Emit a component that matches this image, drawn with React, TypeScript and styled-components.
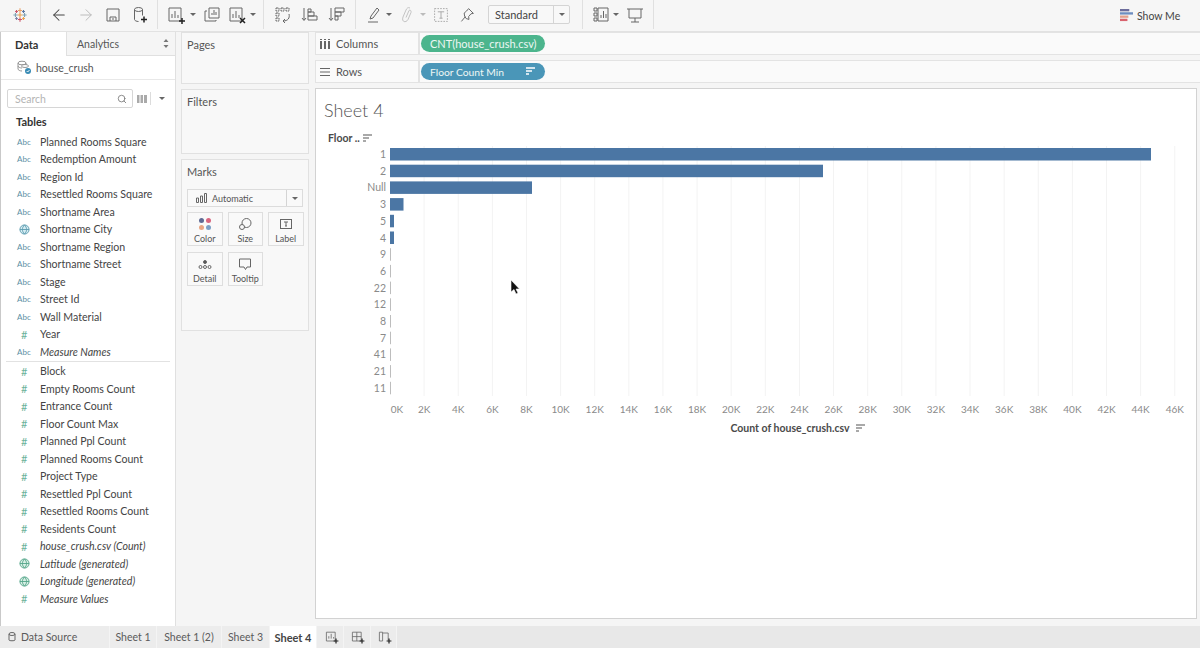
import React from 'react'
import styled, { createGlobalStyle } from 'styled-components'
import { ArrowLeft, ArrowRight, Search } from 'lucide-react'

const GlobalStyle = createGlobalStyle`
    html, body { margin: 0; padding: 0; background: #f5f5f5; }
    body { font-family: "Lato", "Liberation Sans", sans-serif; color: #4a4a4a; overflow: hidden; }
`;

const Page = styled.div`
    width: 1200px;
    height: 648px;
    display: flex;
    flex-direction: column;
    overflow: hidden;
    position: relative;
`;

const Toolbar = styled.div`
    height: 32px;
    flex: none;
    display: flex;
    align-items: stretch;
    box-sizing: border-box;
    border-bottom: 1px solid #e2e2e2;
    background: #f6f6f6;
`;

const ToolGroup = styled.div<{ $w: number; $start?: number }>`
    width: ${p => p.$w}px;
    flex: none;
    box-sizing: border-box;
    display: flex;
    align-items: center;
    justify-content: ${p => p.$start ? 'flex-start' : 'center'};
    padding-left: ${p => p.$start || 0}px;
    border-right: 1px solid #e0e0e0;
    height: 29px;
`;

const ToolButton = styled.div<{ $w?: number; $ml?: number }>`
    width: ${p => p.$w || 27}px;
    height: 24px;
    flex: none;
    margin-left: ${p => p.$ml || 0}px;
    display: flex;
    align-items: center;
    justify-content: center;
    color: #666;
`;

const Caret = styled.span<{ $light?: boolean }>`
    width: 0;
    height: 0;
    flex: none;
    border-left: 3px solid transparent;
    border-right: 3px solid transparent;
    border-top: 3px solid ${p => p.$light ? '#bbb' : '#666'};
`;

const StandardSelect = styled.div`
    width: 82px;
    height: 19px;
    margin-left: 10px;
    box-sizing: border-box;
    border: 1px solid #d4d4d4;
    border-radius: 2px;
    display: flex;
    align-items: center;
    background: #f8f8f8;
    font-size: 11px;
    color: #444;
`;

const StandardText = styled.span`
    flex: 1;
    padding-left: 6px;
`;

const SelectArrow = styled.div`
    width: 15px;
    height: 100%;
    border-left: 1px solid #d4d4d4;
    display: flex;
    align-items: center;
    justify-content: center;
`;

const ShowMe = styled.div`
    margin-left: auto;
    width: 80px;
    display: flex;
    align-items: center;
    gap: 4px;
    font-size: 10.5px;
    color: #444;
`;

const Main = styled.div`
    flex: 1;
    min-height: 0;
    display: flex;
`;

const DataPane = styled.div`
    width: 176px;
    flex: none;
    box-sizing: border-box;
    background: #fff;
    border-left: 1px solid #c9c9c9;
    border-right: 1px solid #e0e0e0;
    display: flex;
    flex-direction: column;
    height: 594px;
`;

const TabRow = styled.div`
    height: 24px;
    flex: none;
    display: flex;
    font-size: 11px;
`;

const PaneTab = styled.div<{ $active?: boolean }>`
    box-sizing: border-box;
    display: flex;
    align-items: center;
    ${p => p.$active
        ? 'width: 65px; padding-left: 14px; font-weight: 700; color: #333; background: #fff;'
        : 'flex: 1; padding-left: 10px; font-size: 10.5px; background: #f5f5f5; border-left: 1px solid #e0e0e0; border-bottom: 1px solid #e0e0e0; color: #555; justify-content: space-between; padding-right: 6px;'}
`;

const SourceRow = styled.div`
    height: 24px;
    flex: none;
    box-sizing: border-box;
    display: flex;
    align-items: center;
    gap: 4px;
    padding-left: 16px;
    font-size: 10.5px;
    color: #555;
    border-bottom: 1px solid #e8e8e8;
`;

const SearchRow = styled.div`
    flex: none;
    display: flex;
    align-items: center;
    padding: 9px 0 0 6px;
    height: 19px;
`;

const SearchBox = styled.div`
    width: 126px;
    height: 19px;
    box-sizing: border-box;
    border: 1px solid #d6d6d6;
    border-radius: 2px;
    display: flex;
    align-items: center;
    justify-content: space-between;
    padding: 0 5px 0 7px;
    font-size: 10.5px;
    color: #b4b4b4;
`;

const ViewToggle = styled.div`
    display: flex;
    align-items: center;
    margin-left: 4px;
`;

const ToggleDivider = styled.span`
    width: 1px;
    height: 13px;
    margin: 0 8px 0 3px;
    background: #dcdcdc;
`;

const TablesHeading = styled.div`
    font-size: 11px;
    font-weight: 700;
    color: #333;
    padding-left: 15px;
    margin-top: 5px;
    height: 18px;
    line-height: 18px;
`;

const FieldList = styled.div`
    margin-top: 2px;
    display: flex;
    flex-direction: column;
`;

const FieldRow = styled.div`
    height: 17.5px;
    display: flex;
    align-items: center;
    font-size: 10.6px;
    color: #444;
    white-space: nowrap;
`;

const FieldIcon = styled.span<{ $kind: string }>`
    width: 39px;
    flex: none;
    box-sizing: border-box;
    padding-left: ${p => p.$kind === 'abc' ? 16 : p.$kind === 'num' ? 20 : 18}px;
    font-size: ${p => p.$kind === 'abc' ? 8 : 11}px;
    color: ${p => p.$kind === 'abc' ? '#5c8fa5' : '#6cb39b'};
    display: flex;
    align-items: center;
`;

const FieldName = styled.span<{ $italic?: boolean }>`
    font-style: ${p => p.$italic ? 'italic' : 'normal'};
`;

const FieldSeparator = styled.div`
    height: 1px;
    margin: 0.5px 5px 0.5px 5px;
    background: #e2e2e2;
`;

const CardsColumn = styled.div`
    width: 128px;
    flex: none;
    margin: 0 6px 0 5px;
    display: flex;
    flex-direction: column;
    gap: 5px;
`;

const Card = styled.div<{ $h: number }>`
    height: ${p => p.$h}px;
    box-sizing: border-box;
    border: 1px solid #e1e1e1;
    background: #f8f8f8;
    padding: 5px 5px;
    font-size: 11px;
    color: #555;
`;

const MarksType = styled.div`
    height: 18px;
    box-sizing: border-box;
    margin-top: 11px;
    border: 1px solid #dcdcdc;
    display: flex;
    align-items: center;
    font-size: 9px;
    color: #555;
    background: #f9f9f9;
    svg { margin-left: 8px; }
`;

const MarksTypeText = styled.span`
    flex: 1;
    margin-left: 4px;
`;

const MarksGrid = styled.div`
    margin-top: 5px;
    display: grid;
    grid-template-columns: 35.5px 35.5px 35.5px;
    grid-auto-rows: 34px;
    column-gap: 5px;
    row-gap: 6px;
`;

const MarkButton = styled.div`
    box-sizing: border-box;
    border: 1px solid #dedede;
    background: #f9f9f9;
    display: flex;
    flex-direction: column;
    align-items: center;
    justify-content: space-between;
    padding: 4px 0 1px;
    font-size: 9px;
    color: #555;
    svg { flex: none; }
`;

const WorkColumn = styled.div`
    flex: 1;
    min-width: 0;
    margin-right: 3px;
    display: flex;
    flex-direction: column;
`;

const ShelfRow = styled.div`
    height: 23px;
    margin: 0 -3px 5px 0;
    display: flex;
    box-sizing: border-box;
    border-bottom: 1px solid #e3e3e3;
    background: #fafafa;
    align-items: stretch;
`;

const ShelfLabel = styled.div`
    width: 104px;
    flex: none;
    box-sizing: border-box;
    border: 1px solid #e3e3e3;
    border-bottom: 0;
    display: flex;
    align-items: center;
    gap: 6px;
    padding-left: 4px;
    font-size: 11px;
    color: #555;
`;

const ShelfBody = styled.div`
    flex: 1;
    display: flex;
    align-items: center;
    padding-left: 1px;
    border-left: 1px solid #e3e3e3;
    border-top: 1px solid #e3e3e3;
`;

const Pill = styled.div<{ $color: string; $tight?: boolean }>`
    width: 124px;
    height: 17px;
    box-sizing: border-box;
    border-radius: 9px;
    background: ${p => p.$color};
    color: #eef7f4;
    font-size: ${p => p.$tight ? 10.3 : 11}px;
    display: flex;
    align-items: center;
    justify-content: space-between;
    padding: 0 9px;
`;

const SheetCard = styled.div`
    height: 531px;
    box-sizing: border-box;
    border: 1px solid #d2d2d2;
    background: #fff;
    position: relative;
`;

const SheetTitle = styled.div`
    height: 41px;
    box-sizing: border-box;
    padding: 10px 0 0 8px;
    font-size: 18px;
    font-weight: 300;
    line-height: 22px;
    color: #555;
`;

const ChartSvg = styled.svg`
    display: block;
    font-family: "Lato", "Liberation Sans", sans-serif;
`;

const CursorMark = styled.svg`
    position: absolute;
    left: 194px;
    top: 191px;
`;

const TabBar = styled.div`
    height: 22px;
    flex: none;
    display: flex;
    align-items: stretch;
    background: #e8e8e8;
    font-size: 10.5px;
    color: #5a5a5a;
`;

const SheetTab = styled.div<{ $w: number; $active?: boolean; $left?: number }>`
    width: ${p => p.$w}px;
    flex: none;
    box-sizing: border-box;
    display: flex;
    align-items: center;
    justify-content: ${p => p.$left ? 'flex-start' : 'center'};
    padding-left: ${p => p.$left || 0}px;
    gap: 5px;
    border-right: 1px solid #f4f4f4;
    background: ${p => p.$active ? '#fff' : '#ececec'};
    font-size: ${p => p.$active ? 11 : 10.5}px;
    font-weight: ${p => p.$active ? 700 : 400};
    color: ${p => p.$active ? '#444' : '#5a5a5a'};
`;

type IconProps = { size?: number; children: React.ReactNode }

function Ico({ size = 20, children }: IconProps) {
    return (
        <svg width={size} height={size} viewBox="0 0 20 20" fill="none" stroke="#666" strokeWidth="1">
            {children}
        </svg>
    );
}

const Plus = ({ x, y }: { x: number; y: number }) => (
    <path d={`M${x - 3} ${y}h6M${x} ${y - 3}v6`} stroke="#222" strokeWidth="1.5" />
);

function TableauLogo() {
    const marks = [
        [10, 3.5, 3, '#e8a36c'], [10, 16.5, 3, '#c9566a'], [3.5, 10, 3, '#7fa3b5'], [16.5, 10, 3, '#7fa3b5'],
        [10, 10, 3.5, '#eba24f'], [5, 5, 2, '#c9566a'], [15, 5, 2, '#5a74a0'], [5, 15, 2, '#7b83a8'], [15, 15, 2, '#eba24f'],
    ] as [number, number, number, string][];
    return (
        <svg width="14" height="14" viewBox="0 0 20 20" fill="none" strokeWidth="1.6">
            {marks.map(([x, y, r, c], i) => (
                <path key={i} d={`M${x - r} ${y}h${r * 2}M${x} ${y - r}v${r * 2}`} stroke={c} />
            ))}
        </svg>
    );
}

const SaveIcon = () => <Ico><path d="M4 4h12v12H4zM7 16v-4h6v4M9 14h2" /></Ico>;
const NewDataIcon = () => <Ico><ellipse cx="8.5" cy="4.5" rx="4" ry="2" /><path d="M4.5 4.5v10c0 1 2 2 4 2M12.5 4.5v6" /><Plus x={14} y={14.5} /></Ico>;
const NewSheetIcon = () => <Ico><path d="M3 3h12v13H3zM6 13V9M9 13V6M12 13v-3" /><Plus x={16} y={16} /></Ico>;
const DuplicateIcon = () => <Ico><path d="M7 3h10v10H7zM5 6H3v10h11v-1M10 10V8M12 10V5M14 10V7" /></Ico>;
const ClearIcon = () => (
    <Ico>
        <path d="M3 3h12v13H3zM6 13V9M9 13V6M12 13v-3" />
        <path d="M13 13l5 5M18 13l-5 5" stroke="#222" strokeWidth="1.5" />
    </Ico>
);
const SwapIcon = () => (
    <Ico>
        <path d="M3 3h3v3H3zM8 3h3v3H8zM13 3h3v3h-3zM3 8h3v3H3zM3 13h3v3H3z" strokeDasharray="2 .7" />
        <path d="M16 9c1 4-1 7-6 7M12 14l-2 2 2 2" />
    </Ico>
);
const SortAscIcon = () => <Ico><path d="M4 3v12M2 13l2 2.5L6 13M8 4h3v3H8zM8 7h6v4H8zM8 11h9v4H8z" /></Ico>;
const SortDescIcon = () => <Ico><path d="M4 3v12M2 13l2 2.5L6 13M8 3h9v4H8zM8 7h6v4H8zM8 11h3v4H8z" /></Ico>;
const HighlightIcon = () => <Ico><path d="M12 3l2 2-6 8-3 1 1-3zM3 17h10" /></Ico>;
const ClipIcon = () => (
    <svg width="20" height="20" viewBox="0 0 20 20" fill="none" stroke="#c4c4c4" strokeWidth="1">
        <path d="M13 3c-2-1-3 0-4 2l-3 7c-1 3 0 4 1 4.500s3 0 4-2l3-7c.5-2-1-3-2-2l-3 7" />
    </svg>
);
const TextBoxIcon = () => (
    <svg width="16" height="16" viewBox="0 0 20 20" fill="none" stroke="#999" strokeWidth="1">
        <path d="M2 2h16v16H2z" strokeDasharray="2 1.500" />
        <path d="M6 6h8M10 6v8M8 14h4" />
    </svg>
);
const PinIcon = () => (
    <svg width="16" height="16" viewBox="0 0 20 20" fill="none" stroke="#666" strokeWidth="1.2">
        <path d="M12 2l6 6-3 .5-3 3.500.5 3.500-3.500-1-2-3-.5-4 3-2.500zM8 12l-5 6" />
    </svg>
);
const ShowCardsIcon = () => <Ico><path d="M3 3h3v3H3zM3 8h3v3H3zM3 13h3v3H3zM7 3h10v13H7zM10 13v-3M12.500 13V6M15 13V9" /></Ico>;
const PresentIcon = () => <Ico><path d="M2 4h16M4 4v9h12V4M10 13v4M6 17h8" /></Ico>;

const ShowMeIcon = () => (
    <svg width="13" height="13" viewBox="0 0 14 14">
        <rect x="0" y="0" width="10" height="2.500" fill="#6d6d9c" />
        <rect x="0" y="3.500" width="14" height="2.500" fill="#6d8dc0" />
        <rect x="0" y="7" width="9" height="2.500" fill="#e3a08c" />
        <rect x="0" y="10.500" width="8" height="2.500" fill="#d9636e" />
    </svg>
);

const SortGlyph = ({ color = '#555' }: { color?: string }) => (
    <svg width="10" height="9" viewBox="0 0 10 9" stroke={color} strokeWidth="1.300" fill="none">
        <path d="M0 1h9M0 4h6M0 7h3" />
    </svg>
);

const Globe = () => (
    <svg width="11" height="11" viewBox="0 0 12 12" fill="#d6ecf2" stroke="#5c9cb0" strokeWidth="1">
        <circle cx="6" cy="6" r="5" />
        <path d="M1 6h10M6 1c-3 3-3 7 0 10M6 1c3 3 3 7 0 10" fill="none" />
    </svg>
);

const GreenGlobe = () => (
    <svg width="11" height="11" viewBox="0 0 12 12" fill="#d7efe4" stroke="#54a58a" strokeWidth="1">
        <circle cx="6" cy="6" r="5" />
        <path d="M1 6h10M6 1c-3 3-3 7 0 10M6 1c3 3 3 7 0 10" fill="none" />
    </svg>
);

const SourceIcon = () => (
    <svg width="15" height="15" viewBox="0 0 15 15" fill="none" stroke="#8a8a8a" strokeWidth=".9">
        <ellipse cx="5" cy="3" rx="4" ry="1.800" />
        <path d="M1 3v6c0 1 2 2 4 2M9 3v2M1 6c0 1 2 2 4 2" />
        <ellipse cx="8" cy="6" rx="3.500" ry="1.500" fill="#fff" />
        <circle cx="11" cy="11" r="3" fill="#3a8cb5" stroke="none" />
        <path d="M9.700 11l1 1 1.800-2" stroke="#fff" />
    </svg>
);

type Field = { name: string; kind: 'abc' | 'globe' | 'num' | 'gglobe'; italic?: boolean }

const dimensions: Field[] = [
    { name: 'Planned Rooms Square', kind: 'abc' },
    { name: 'Redemption Amount', kind: 'abc' },
    { name: 'Region Id', kind: 'abc' },
    { name: 'Resettled Rooms Square', kind: 'abc' },
    { name: 'Shortname Area', kind: 'abc' },
    { name: 'Shortname City', kind: 'globe' },
    { name: 'Shortname Region', kind: 'abc' },
    { name: 'Shortname Street', kind: 'abc' },
    { name: 'Stage', kind: 'abc' },
    { name: 'Street Id', kind: 'abc' },
    { name: 'Wall Material', kind: 'abc' },
    { name: 'Year', kind: 'num' },
    { name: 'Measure Names', kind: 'abc', italic: true },
];

const measures: Field[] = [
    { name: 'Block', kind: 'num' },
    { name: 'Empty Rooms Count', kind: 'num' },
    { name: 'Entrance Count', kind: 'num' },
    { name: 'Floor Count Max', kind: 'num' },
    { name: 'Planned Ppl Count', kind: 'num' },
    { name: 'Planned Rooms Count', kind: 'num' },
    { name: 'Project Type', kind: 'num' },
    { name: 'Resettled Ppl Count', kind: 'num' },
    { name: 'Resettled Rooms Count', kind: 'num' },
    { name: 'Residents Count', kind: 'num' },
    { name: 'house_crush.csv (Count)', kind: 'num', italic: true },
    { name: 'Latitude (generated)', kind: 'gglobe', italic: true },
    { name: 'Longitude (generated)', kind: 'gglobe', italic: true },
    { name: 'Measure Values', kind: 'num', italic: true },
];

function FieldItem({ field }: { field: Field }) {
    return (
        <FieldRow>
            <FieldIcon $kind={field.kind}>
                {field.kind === 'abc' && 'Abc'}
                {field.kind === 'num' && '#'}
                {field.kind === 'globe' && <Globe />}
                {field.kind === 'gglobe' && <GreenGlobe />}
            </FieldIcon>
            <FieldName $italic={field.italic}>{field.name}</FieldName>
        </FieldRow>
    );
}

// floor value and where the bar ends, in pixels from the axis
const floors: [string, number][] = [
    ['1', 761], ['2', 433], ['Null', 142], ['3', 13.5], ['5', 4], ['4', 4], ['9', 1], ['6', 1],
    ['22', 1], ['12', 1], ['8', 1], ['7', 1], ['41', 1], ['21', 1], ['11', 1],
];

const AXIS_X = 74;
const PER_K = 17.06;
const ticks = Array.from({ length: 24 }, (_, i) => i * 2);

function FloorChart() {
    return (
        <ChartSvg width="880" height="320" viewBox="0 0 880 320">
            <text x="12" y="12" fontSize="10.5" fontWeight="700" fill="#4a4a4a">Floor ..</text>
            <g transform="translate(47 4)" stroke="#555" strokeWidth="1.200" fill="none">
                <path d="M0 1h9M0 4h6M0 7h3" />
            </g>
            {ticks.map(k => (
                <g key={k}>
                    {k > 0 && <line x1={AXIS_X + k * PER_K} x2={AXIS_X + k * PER_K} y1="16" y2="266" stroke="#f3f3f3" />}
                    <text
                        x={k === 0 ? AXIS_X + 7 : AXIS_X + k * PER_K}
                        y="283"
                        fontSize="10"
                        fill="#8a8a8a"
                        textAnchor="middle"
                    >
                        {k}K
                    </text>
                </g>
            ))}
            {floors.map(([label, w], i) => (
                <g key={label}>
                    <text x={AXIS_X - 4} y={28 + i * 16.7} fontSize="10.500" fill="#8a8a8a" textAnchor="end">{label}</text>
                    <rect x={AXIS_X} y={18 + i * 16.7} width={w} height={12.5} fill={w <= 1 ? '#bdbdbd' : '#4b76a4'} />
                </g>
            ))}
            <text x="474" y="302" fontSize="10.5" fontWeight="700" fill="#4a4a4a" textAnchor="middle">Count of house_crush.csv</text>
            <g transform="translate(540 294)" stroke="#555" strokeWidth="1.200" fill="none">
                <path d="M0 1h9M0 4h6M0 7h3" />
            </g>
        </ChartSvg>
    );
}

function App() {
    return (
        <Page>
            <GlobalStyle />
            <Toolbar>
                <ToolGroup $w={41}><TableauLogo /></ToolGroup>
                <ToolGroup $w={117}>
                    <ToolButton><ArrowLeft size={18} strokeWidth={1.4} color="#444" /></ToolButton>
                    <ToolButton><ArrowRight size={18} strokeWidth={1.3} color="#bbb" /></ToolButton>
                    <ToolButton><SaveIcon /></ToolButton>
                    <ToolButton><NewDataIcon /></ToolButton>
                </ToolGroup>
                <ToolGroup $w={106} $start={8}>
                    <ToolButton $w={20}><NewSheetIcon /></ToolButton>
                    <ToolButton $w={14}><Caret /></ToolButton>
                    <ToolButton $w={23}><DuplicateIcon /></ToolButton>
                    <ToolButton $w={27}><ClearIcon /></ToolButton>
                    <Caret />
                </ToolGroup>
                <ToolGroup $w={92}>
                    <ToolButton><SwapIcon /></ToolButton>
                    <ToolButton><SortAscIcon /></ToolButton>
                    <ToolButton><SortDescIcon /></ToolButton>
                </ToolGroup>
                <ToolGroup $w={227} $start={9}>
                    <ToolButton $w={20}><HighlightIcon /></ToolButton>
                    <ToolButton $w={7}><Caret /></ToolButton>
                    <ToolButton $w={26} $ml={2}><ClipIcon /></ToolButton>
                    <Caret $light />
                    <ToolButton $w={30}><TextBoxIcon /></ToolButton>
                    <ToolButton $w={22}><PinIcon /></ToolButton>
                    <StandardSelect>
                        <StandardText>Standard</StandardText>
                        <SelectArrow><Caret /></SelectArrow>
                    </StandardSelect>
                </ToolGroup>
                <ToolGroup $w={71} $start={8}>
                    <ToolButton $w={20}><ShowCardsIcon /></ToolButton>
                    <ToolButton $w={10}><Caret /></ToolButton>
                    <ToolButton $w={28}><PresentIcon /></ToolButton>
                </ToolGroup>
                <ShowMe><ShowMeIcon />Show Me</ShowMe>
            </Toolbar>
            <Main>
                <DataPane>
                    <TabRow>
                        <PaneTab $active>Data</PaneTab>
                        <PaneTab>
                            Analytics
                            <svg width="6" height="9" viewBox="0 0 6 9" fill="#777"><path d="M3 0l2.500 3h-5zM3 9l2.500-3h-5z" /></svg>
                        </PaneTab>
                    </TabRow>
                    <SourceRow>
                        <SourceIcon />
                        house_crush
                    </SourceRow>
                    <SearchRow>
                        <SearchBox>
                            Search
                            <Search size={10} color="#777" />
                        </SearchBox>
                        <ViewToggle>
                            <svg width="10" height="8" viewBox="0 0 10 8" fill="#aaa"><path d="M0 0h2.500v8H0zM3.500 0H6v8H3.500zM7 0h3v8H7z" /></svg>
                            <ToggleDivider />
                            <Caret />
                        </ViewToggle>
                    </SearchRow>
                    <TablesHeading>Tables</TablesHeading>
                    <FieldList>
                        {dimensions.map(f => <FieldItem key={f.name} field={f} />)}
                        <FieldSeparator />
                        {measures.map(f => <FieldItem key={f.name} field={f} />)}
                    </FieldList>
                </DataPane>
                <CardsColumn>
                    <Card $h={52}>Pages</Card>
                    <Card $h={65}>Filters</Card>
                    <Card $h={172}>
                        Marks
                        <MarksType>
                            <svg width="12" height="10" viewBox="0 0 12 10" fill="none" stroke="#666"><path d="M.500 5h2v4.500h-2zM4.500 3h2v6.500h-2zM8.500.500h2v9h-2z" /></svg>
                            <MarksTypeText>Automatic</MarksTypeText>
                            <SelectArrow><Caret /></SelectArrow>
                        </MarksType>
                        <MarksGrid>
                            <MarkButton>
                                <svg width="14" height="14" viewBox="0 0 14 14">
                                    <circle cx="3.500" cy="3.500" r="2.500" fill="#5f6a94" />
                                    <circle cx="10.500" cy="3.500" r="2.500" fill="#d9657f" />
                                    <circle cx="3.500" cy="10.500" r="2.500" fill="#e9a583" />
                                    <circle cx="10.500" cy="10.500" r="2.500" fill="#7c9fc6" />
                                </svg>
                                Color
                            </MarkButton>
                            <MarkButton>
                                <svg width="14" height="14" viewBox="0 0 14 14" fill="none" stroke="#666">
                                    <circle cx="8.500" cy="6" r="4.500" />
                                    <circle cx="4" cy="10" r="2.500" fill="#f9f9f9" />
                                </svg>
                                Size
                            </MarkButton>
                            <MarkButton>
                                <svg width="14" height="14" viewBox="0 0 14 14" fill="none" stroke="#666">
                                    <rect x="1.500" y="2.500" width="11" height="9" />
                                    <path d="M5 5h4M7 5v4M6 9h2" />
                                </svg>
                                Label
                            </MarkButton>
                            <MarkButton>
                                <svg width="14" height="14" viewBox="0 0 14 14" fill="none" stroke="#666">
                                    <circle cx="7" cy="5" r="1.500" fill="#555" />
                                    <circle cx="2.500" cy="10" r="1.500" />
                                    <circle cx="7" cy="10" r="1.500" />
                                    <circle cx="11.500" cy="10" r="1.500" />
                                </svg>
                                Detail
                            </MarkButton>
                            <MarkButton>
                                <svg width="14" height="14" viewBox="0 0 14 14" fill="none" stroke="#666">
                                    <path d="M1.500 2h11v8H9l-1.500 2.500L6 10H1.500z" />
                                </svg>
                                Tooltip
                            </MarkButton>
                        </MarksGrid>
                    </Card>
                </CardsColumn>
                <WorkColumn>
                    <ShelfRow>
                        <ShelfLabel>
                            <svg width="10" height="10" viewBox="0 0 10 10" fill="#666"><path d="M0 2h2v8H0zM4 2h2v8H4zM8 2h2v8H8zM0 0h2v1H0zM4 0h2v1H4zM8 0h2v1H8z" /></svg>
                            Columns
                        </ShelfLabel>
                        <ShelfBody><Pill $color="#4cb58d">CNT(house_crush.csv)</Pill></ShelfBody>
                    </ShelfRow>
                    <ShelfRow>
                        <ShelfLabel>
                            <svg width="10" height="10" viewBox="0 0 10 10" fill="#666"><path d="M0 1h10v1H0zM0 4.500h10v1H0zM0 8h10v1H0z" /></svg>
                            Rows
                        </ShelfLabel>
                        <ShelfBody>
                            <Pill $color="#4a96b8" $tight>
                                Floor Count Min
                                <SortGlyph color="#fff" />
                            </Pill>
                        </ShelfBody>
                    </ShelfRow>
                    <SheetCard>
                        <SheetTitle>Sheet 4</SheetTitle>
                        <FloorChart />
                        <CursorMark width="10" height="15" viewBox="0 0 10 15">
                            <path d="M1 0v12l3-2.500 2 4.500 2-1-2-4h3.500z" fill="#111" stroke="#fff" strokeWidth=".6" />
                        </CursorMark>
                    </SheetCard>
                </WorkColumn>
            </Main>
            <TabBar>
                <SheetTab $w={110} $left={8}>
                    <svg width="8" height="10" viewBox="0 0 8 10" fill="none" stroke="#666"><ellipse cx="4" cy="2" rx="3" ry="1.500" /><path d="M1 2v6c0 1 6 1 6 0V2" /></svg>
                    Data Source
                </SheetTab>
                <SheetTab $w={47}>Sheet 1</SheetTab>
                <SheetTab $w={65}>Sheet 1 (2)</SheetTab>
                <SheetTab $w={48}>Sheet 3</SheetTab>
                <SheetTab $w={47} $active>Sheet 4</SheetTab>
                <SheetTab $w={27} $left={7}><Ico size={16}><path d="M3 4h11v11H3zM6 12V9M9 12V6M12 12v-2" /><Plus x={15} y={15} /></Ico></SheetTab>
                <SheetTab $w={27} $left={6}><Ico size={16}><path d="M3 4h11v11H3zM3 9.500h11M8.500 4v11" /><Plus x={15} y={15} /></Ico></SheetTab>
                <SheetTab $w={26} $left={6}><Ico size={16}><path d="M3 4h4v11H3zM7 5h7v9" /><Plus x={15} y={15} /></Ico></SheetTab>
            </TabBar>
        </Page>
    );
}

export default App;
